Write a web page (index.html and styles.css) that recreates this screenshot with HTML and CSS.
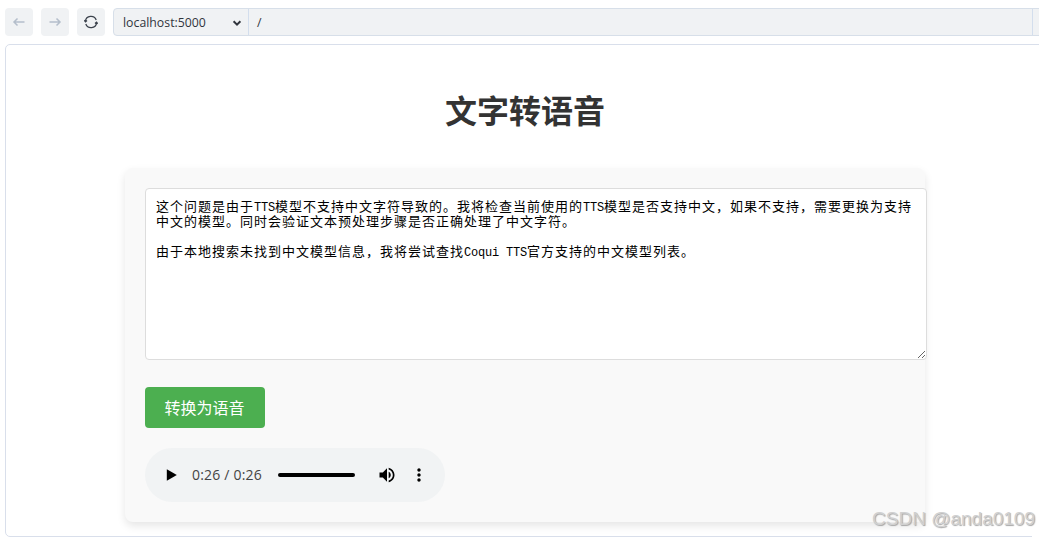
FILE: index.html
```html
<!DOCTYPE html>
<html lang="zh-CN">
<head>
    <meta charset="UTF-8">
    <title>文字转语音</title>
    <link rel="stylesheet" href="styles.css">
</head>
<body>
<div class="toolbar">
    <span class="nav disabled">
        <svg width="14" height="14" viewBox="0 0 14 14"><path d="M12.5 7H2M5.5 3.5L2 7l3.5 3.5"/></svg>
    </span>
    <span class="nav disabled">
        <svg width="14" height="14" viewBox="0 0 14 14"><path d="M1.5 7H12M8.5 3.5L12 7l-3.5 3.5"/></svg>
    </span>
    <span class="nav">
        <svg width="14" height="14" viewBox="0 0 14 14"><path d="M1.4 6.2A5.6 5.6 0 0 1 12.2 5M12.6 7.8A5.6 5.6 0 0 1 1.8 9M0.3 5.2l1.2 1.6 1.5-1.3M13.7 8.8l-1.2-1.6-1.5 1.3"/></svg>
    </span>
    <div class="address">
        <div class="host">
            <span>localhost:5000</span>
            <svg width="10" height="10" viewBox="0 0 10 10"><path d="M1.6 3.2L5 6.6l3.4-3.4"/></svg>
        </div>
        <div class="path">/</div>
        <div class="more"></div>
    </div>
</div>
<div class="frame">
    <h1>文字转语音</h1>
    <div class="container">
        <div class="textarea">这个问题是由于<span class="en">TTS</span>模型不支持中文字符导致的。我将检查当前使用的<span class="en">TTS</span>模型是否支持中文，如果不支持，需要更换为支持
中文的模型。同时会验证文本预处理步骤是否正确处理了中文字符。

由于本地搜索未找到中文模型信息，我将尝试查找<span class="en">Coqui TTS</span>官方支持的中文模型列表。</div>
        <button class="convert">转换为语音</button>
        <div class="audio">
            <svg class="play" width="20" height="20" viewBox="0 0 24 24"><path d="M7 5v14l12-7z"/></svg>
            <span class="time">0:26 / 0:26</span>
            <span class="track"></span>
            <svg class="volume" width="20" height="20" viewBox="0 0 24 24"><path d="M3 9v6h4l5 5V4L7 9H3zm13.5 3c0-1.77-1.02-3.29-2.5-4.03v8.05c1.48-.73 2.5-2.25 2.5-4.02zM14 3.23v2.06c2.89.86 5 3.54 5 6.71s-2.11 5.85-5 6.71v2.06c4.01-.91 7-4.49 7-8.77s-2.99-7.86-7-8.77z"/></svg>
            <svg class="menu" width="20" height="20" viewBox="0 0 24 24"><path d="M12 8c1.1 0 2-.9 2-2s-.9-2-2-2-2 .9-2 2 .9 2 2 2zm0 2c-1.1 0-2 .9-2 2s.9 2 2 2 2-.9 2-2-.9-2-2-2zm0 6c-1.1 0-2 .9-2 2s.9 2 2 2 2-.9 2-2-.9-2-2-2z"/></svg>
        </div>
    </div>
</div>
<div class="corner"></div>
<div class="watermark">CSDN @anda0109</div>
</body>
</html>
```
FILE: styles.css
```css
*{
    box-sizing: border-box;
}
body{
    margin: 0;
    height: 537px;
    padding: 8px 0 0 5px;
    position: relative;
    overflow: hidden;
    background: #fff;
    font-family: "Open Sans", "Noto Sans CJK SC", sans-serif;
}
.toolbar{
    display: flex;
    gap: 8px;
    height: 28px;
    width: 1060px;
}
.nav{
    width: 28px;
    height: 28px;
    border-radius: 4px;
    background: #f0f2f4;
    display: flex;
    align-items: center;
    justify-content: center;
}
.nav svg{
    fill: none;
    stroke: #3b424c;
    stroke-width: 1.3;
}
.nav.disabled svg{
    stroke: #b4becb;
    stroke-width: 1.5;
}
.address{
    flex: 1;
    display: flex;
    background: #f0f2f4;
    border: 1px solid #d7dfe9;
    border-radius: 4px;
    font-size: 12.3px;
    line-height: 28px;
    color: #30353d;
}
.host{
    width: 135px;
    padding: 0 6px 0 9px;
    border-right: 1px solid #d3deed;
    display: flex;
    align-items: center;
    justify-content: space-between;
}
.host span{
    padding-top: 2px;
}
.host svg{
    margin-top: 2px;
    fill: none;
    stroke: #30353d;
    stroke-width: 2;
}
.path{
    width: 784px;
    padding-left: 8px;
    border-right: 1px solid #d3deed;
}
.frame{
    width: 1040px;
    height: 493px;
    margin-top: 8px;
    padding-top: 43px;
    border: 1px solid #d9dfeb;
    border-radius: 5px;
}
h1{
    margin: 0;
    height: 46px;
    line-height: 46px;
    font-size: 32px;
    text-align: center;
    color: #333;
}
.container{
    width: 800px;
    height: 354px;
    margin: 34px auto 0;
    padding: 20px;
    background: #f9f9f9;
    border-radius: 8px;
    box-shadow: 0 4px 8px rgba(0,0,0,0.1);
}
.textarea{
    width: 782px;
    height: 172px;
    padding: 9px 10px 10px;
    background: #fff;
    border: 1px solid #ddd;
    border-radius: 4px;
    overflow: hidden;
    resize: both;
    white-space: pre;
    font-family: "Noto Sans CJK SC", sans-serif;
    font-size: 13px;
    letter-spacing: 1px;
    line-height: 15px;
    color: #000;
}
.textarea .en{
    font-family: "Liberation Mono", monospace;
    font-size: 12px;
    letter-spacing: -0.2px;
    line-height: 1px;
}
.convert{
    display: block;
    width: 120px;
    height: 41px;
    margin-top: 27px;
    padding: 0 1px 2px 0;
    border: none;
    border-radius: 4px;
    background: #4caf50;
    color: #fff;
    font-family: "Noto Sans CJK SC", sans-serif;
    font-size: 16px;
}
.audio{
    width: 300px;
    height: 54px;
    margin-top: 20px;
    padding-left: 16px;
    border-radius: 27px;
    background: #f1f3f4;
    display: flex;
    align-items: center;
}
.time{
    width: 70px;
    margin-left: 11px;
    padding-bottom: 2px;
    font-size: 14px;
    letter-spacing: 0.2px;
    white-space: nowrap;
    color: #444;
}
.track{
    width: 77px;
    height: 4px;
    margin: 0 22px 0 16px;
    border-radius: 2px;
    background: #000;
}
.menu{
    margin-left: 12px;
}
/* 右下角边框到此为止 */
.corner{
    position: absolute;
    right: 0;
    bottom: 0;
    width: 7px;
    height: 4px;
    background: #fff;
}
.watermark{
    position: absolute;
    right: 4px;
    bottom: 6px;
    font-family: "Liberation Sans", sans-serif;
    font-size: 19px;
    line-height: 24px;
    color: #d0d0d0;
    text-shadow: 1px 1px 1px #a5a5a5;
}
```
